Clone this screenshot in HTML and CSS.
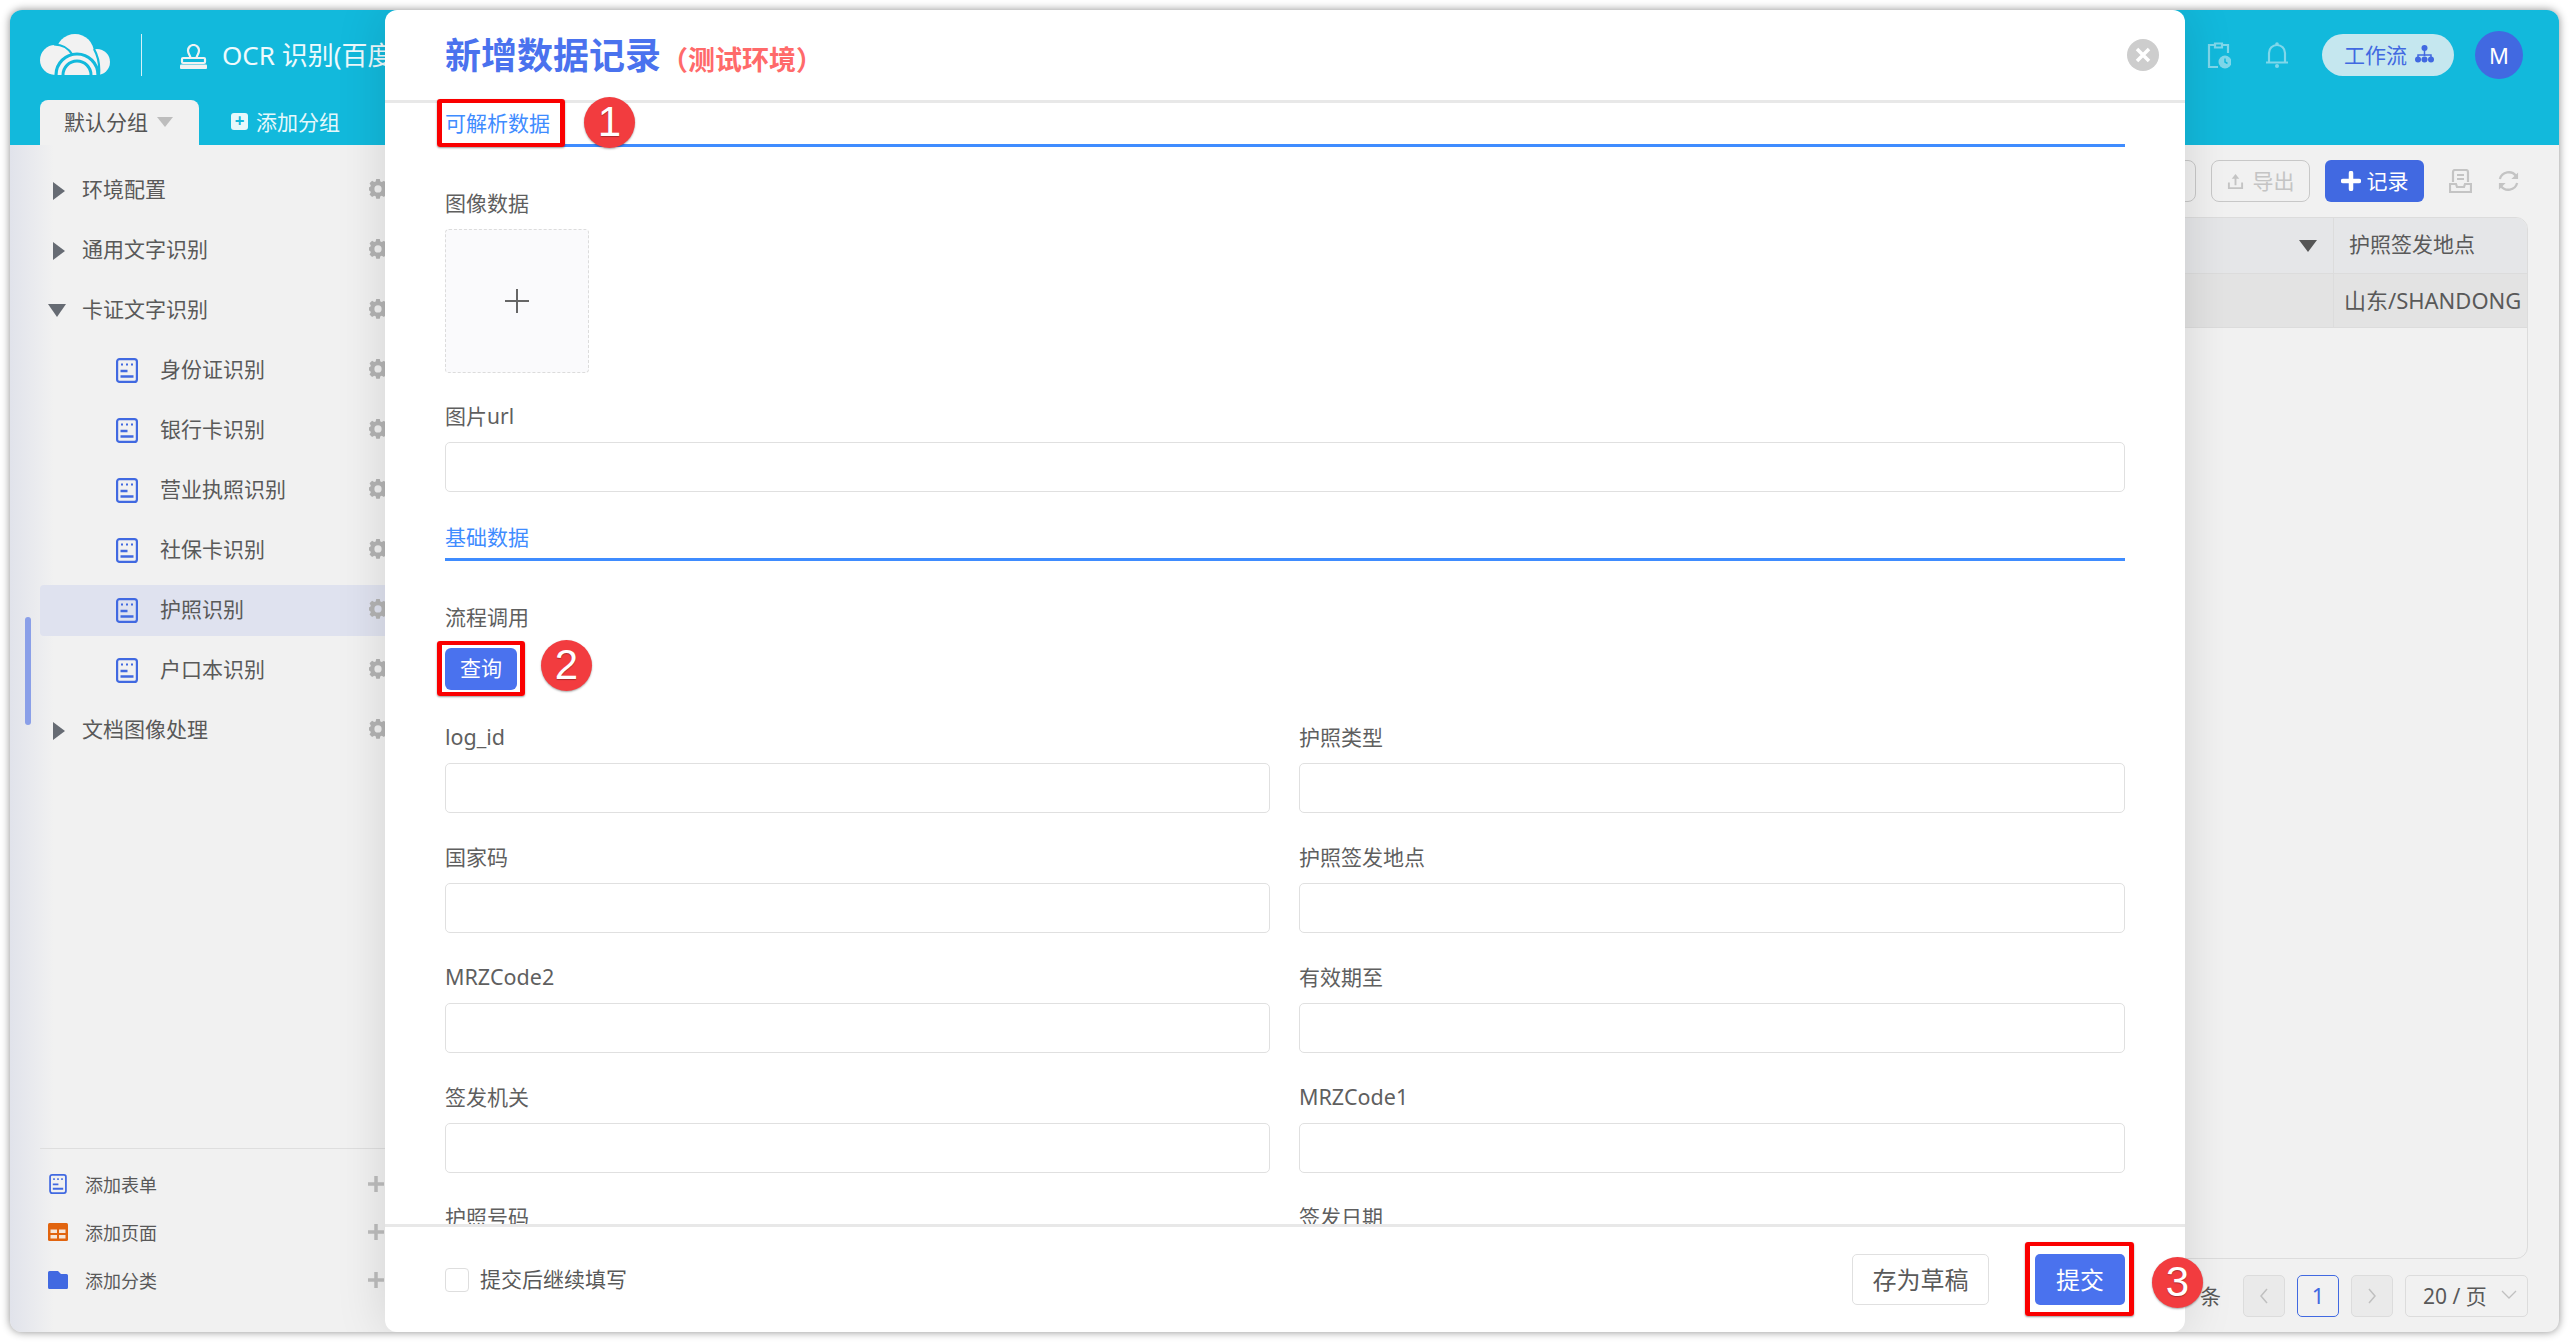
FILE: index.html
```html
<!DOCTYPE html>
<html lang="zh-CN">
<head>
<meta charset="utf-8">
<title>OCR 识别</title>
<link rel="stylesheet" href="styles.css">
</head>
<body>
<svg class="defs" width="0" height="0" aria-hidden="true">
  <symbol id="i-form" viewBox="0 0 22 25">
    <rect x="1.100" y="1.100" width="19.800" height="22.800" rx="2.500" fill="none" stroke="currentColor" stroke-width="2.200"/>
    <path d="M5 6.500h2M10 6.500h2M15 6.500h2" stroke="currentColor" stroke-width="2.200"/>
    <path d="M4.500 13h7M4.500 18.500h13" stroke="currentColor" stroke-width="2.400"/>
  </symbol>
  <symbol id="i-gear" viewBox="0 0 20 20">
    <path fill="#b4b4b4" fill-rule="evenodd" d="M8 0h4l.6 2.700 1.600.7L16.600 2l2.800 2.800-1.400 2.400.7 1.600L21 9.400v3.200l-2.300.6-.7 1.600 1.400 2.400-2.800 2.800-2.400-1.400-1.600.7L12 22H8l-.6-2.700-1.600-.7L3.400 20 .6 17.200 2 14.800l-.7-1.600L-1 12.600V9.400l2.300-.6.700-1.600L.6 4.800 3.400 2l2.400 1.400 1.600-.7zM10 7a4 4 0 1 0 0 8 4 4 0 0 0 0-8z" transform="scale(.9)"/>
  </symbol>
  <symbol id="i-plus" viewBox="0 0 18 18">
    <path d="M9 1v16M1 9h16" stroke="#bdbdbd" stroke-width="3.500"/>
  </symbol>
</svg>

<div class="window">
  <header class="header">
    <div class="topbar">
      <svg class="logo" viewBox="0 0 71 41" aria-hidden="true">
        <g fill="#f2f2f2">
          <circle cx="15" cy="26" r="15"/>
          <circle cx="35" cy="19" r="19"/>
          <circle cx="57" cy="28" r="13"/>
          <rect x="15" y="24" width="42" height="17"/>
        </g>
        <path fill="none" stroke="#12b9dc" stroke-width="2.200" d="M14 10.500c8 0 15 4 19 11M54 15c4 7 6 15 5 26"/>
        <path fill="none" stroke="#12b9dc" stroke-width="3.200" d="M16 41a21 21 0 0 1 42 0"/>
        <path fill="none" stroke="#12b9dc" stroke-width="3" d="M23 41a14 14 0 0 1 28 0"/>
      </svg>
      <span class="divider"></span>
      <svg class="stamp" viewBox="0 0 27 25" aria-hidden="true">
        <path fill="none" stroke="#f2f2f2" stroke-width="2.200" d="M10.500 14c0-2.500-2.500-3.800-2.500-7.500a5.500 5.500 0 0 1 11 0c0 3.700-2.500 5-2.500 7.500"/>
        <rect x="2" y="14" width="23" height="5" rx="1" fill="none" stroke="#f2f2f2" stroke-width="2.200"/>
        <rect x="0" y="20.500" width="27" height="4.500" rx="1" fill="#f2f2f2"/>
      </svg>
      <span class="app-name">OCR 识别(百度云)</span>
      <div class="top-actions">
        <svg class="clip" viewBox="0 0 24 28" aria-hidden="true">
          <path fill="none" stroke="#7fd7ea" stroke-width="2.200" d="M8 4H2v22h9M15 4h6v8M8 2.500h7v4H8z"/>
          <circle cx="18" cy="21" r="6.500" fill="#7fd7ea"/>
          <path d="M18 17.500V21l2.500 1.500" fill="none" stroke="#12b9dc" stroke-width="1.500"/>
        </svg>
        <svg class="bell" viewBox="0 0 24 26" aria-hidden="true">
          <path fill="none" stroke="#7fd7ea" stroke-width="2.200" d="M4 20V11a8 8 0 0 1 16 0v9M1 20.500h22"/>
          <circle cx="12" cy="2" r="1.800" fill="#7fd7ea"/>
          <circle cx="12" cy="24" r="2" fill="#7fd7ea"/>
        </svg>
        <div class="pill">工作流
          <svg class="tree" viewBox="0 0 19 18" aria-hidden="true">
            <circle cx="9.500" cy="3" r="3" fill="#4169e1"/>
            <path d="M9.500 5v6M3 13v-3h13v3" fill="none" stroke="#4169e1" stroke-width="1.500"/>
            <circle cx="3" cy="14.500" r="3" fill="#4169e1"/><circle cx="9.500" cy="14.500" r="3" fill="#4169e1"/><circle cx="16" cy="14.500" r="3" fill="#4169e1"/>
          </svg>
        </div>
        <div class="avatar">M</div>
      </div>
    </div>
    <div class="tabs">
      <div class="tab">默认分组<span class="tab-caret"></span></div>
      <div class="tab-add"><span class="add-box">+</span>添加分组</div>
    </div>
  </header>

  <div class="content">
    <aside class="sidebar">
      <div class="scroll-thumb"></div>
      <nav class="tree-list">
        <div class="row"><span class="twisty"><span class="tri-right"></span></span><span class="row-text">环境配置</span><svg class="gear"><use href="#i-gear"/></svg></div>
        <div class="row"><span class="twisty"><span class="tri-right"></span></span><span class="row-text">通用文字识别</span><svg class="gear"><use href="#i-gear"/></svg></div>
        <div class="row"><span class="twisty"><span class="tri-down"></span></span><span class="row-text">卡证文字识别</span><svg class="gear"><use href="#i-gear"/></svg></div>
        <div class="row child"><svg class="form-icon"><use href="#i-form"/></svg><span class="row-text">身份证识别</span><svg class="gear"><use href="#i-gear"/></svg></div>
        <div class="row child"><svg class="form-icon"><use href="#i-form"/></svg><span class="row-text">银行卡识别</span><svg class="gear"><use href="#i-gear"/></svg></div>
        <div class="row child"><svg class="form-icon"><use href="#i-form"/></svg><span class="row-text">营业执照识别</span><svg class="gear"><use href="#i-gear"/></svg></div>
        <div class="row child"><svg class="form-icon"><use href="#i-form"/></svg><span class="row-text">社保卡识别</span><svg class="gear"><use href="#i-gear"/></svg></div>
        <div class="row child selected"><svg class="form-icon"><use href="#i-form"/></svg><span class="row-text">护照识别</span><svg class="gear"><use href="#i-gear"/></svg></div>
        <div class="row child"><svg class="form-icon"><use href="#i-form"/></svg><span class="row-text">户口本识别</span><svg class="gear"><use href="#i-gear"/></svg></div>
        <div class="row"><span class="twisty"><span class="tri-right"></span></span><span class="row-text">文档图像处理</span><svg class="gear"><use href="#i-gear"/></svg></div>
      </nav>
      <div class="side-foot">
        <div class="foot-row"><svg class="foot-icon form-small"><use href="#i-form"/></svg><span>添加表单</span><svg class="foot-plus"><use href="#i-plus"/></svg></div>
        <div class="foot-row">
          <svg class="foot-icon" viewBox="0 0 20 18" aria-hidden="true"><rect width="20" height="18" rx="1.500" fill="#e1640f"/><path d="M2.500 6.500h6.500v3.500H2.500zM11 6.500h6.500v3.500H11zM2.500 12h6.500v3.500H2.500zM11 12h6.500v3.500H11z" fill="#f6e6da"/></svg>
          <span>添加页面</span><svg class="foot-plus"><use href="#i-plus"/></svg></div>
        <div class="foot-row">
          <svg class="foot-icon" viewBox="0 0 20 18" aria-hidden="true"><path d="M0 1.500A1.500 1.500 0 0 1 1.500 0H10l3 3h5.500A1.500 1.500 0 0 1 20 4.500v12a1.500 1.500 0 0 1-1.500 1.500h-17A1.500 1.500 0 0 1 0 16.500z" fill="#4169e1"/></svg>
          <span>添加分类</span><svg class="foot-plus"><use href="#i-plus"/></svg></div>
      </div>
    </aside>

    <main class="main">
      <div class="toolbar">
        <button class="tool-btn spare">导入</button>
        <button class="tool-btn export">
          <svg class="up-icon" viewBox="0 0 18 18" aria-hidden="true"><path d="M9 1 5 6h3v7h2V6h3zM1 10v7h16v-7h-2v5H3v-5z" fill="#c4c4c4"/></svg>导出</button>
        <button class="record-btn"><svg class="record-plus" viewBox="0 0 20 20" aria-hidden="true"><path d="M10 2v16M2 10h16" stroke="#fff" stroke-width="4.500" stroke-linecap="round"/></svg>记录</button>
        <svg class="tool-icon" viewBox="0 0 23 24" aria-hidden="true"><path d="M4 13V3a2 2 0 0 1 2-2h11a2 2 0 0 1 2 2v10M8 6h7M8 10h7M1 15h6l1 3h7l1-3h6v8H1z" fill="none" stroke="#c4c4c4" stroke-width="2.200"/></svg>
        <svg class="tool-icon refresh" viewBox="0 0 24 24" aria-hidden="true"><path d="M3 10a9.500 9.500 0 0 1 17-3M21 14a9.500 9.500 0 0 1-17 3" fill="none" stroke="#c4c4c4" stroke-width="2.400"/><path d="M22 3v7h-7zM2 21v-7h7z" fill="#c4c4c4"/></svg>
      </div>
      <div class="table">
        <div class="t-row t-head">
          <div class="t-cell t-fill"><span class="t-caret"></span></div>
          <div class="t-cell t-last">护照签发地点</div>
        </div>
        <div class="t-row t-data">
          <div class="t-cell t-fill"></div>
          <div class="t-cell t-last data-text">山东/SHANDONG</div>
        </div>
      </div>
      <div class="pager">
        <span class="pager-total">共 1 条</span>
        <span class="pg-btn"><svg class="chev" viewBox="0 0 10 18" aria-hidden="true"><path d="M8 2 2 9l6 7" fill="none" stroke="#c0c0c0" stroke-width="1.500"/></svg></span>
        <span class="pg-btn current">1</span>
        <span class="pg-btn"><svg class="chev" viewBox="0 0 10 18" aria-hidden="true"><path d="m2 2 6 7-6 7" fill="none" stroke="#c0c0c0" stroke-width="1.500"/></svg></span>
        <span class="pg-size">20 / 页<svg class="chev-down" viewBox="0 0 16 10" aria-hidden="true"><path d="m1 1 7 7 7-7" fill="none" stroke="#c0c0c0" stroke-width="1.300"/></svg></span>
      </div>
    </main>
  </div>

  <section class="modal">
    <div class="modal-head">
      <h1 class="modal-title">新增数据记录</h1><span class="modal-env">（测试环境）</span>
      <svg class="close" viewBox="0 0 32 32" aria-hidden="true"><circle cx="16" cy="16" r="16" fill="#cdcdcd"/><path d="m10 10 12 12M22 10 10 22" stroke="#fff" stroke-width="3.500"/></svg>
    </div>
    <div class="modal-body">
      <div class="sec-title">可解析数据</div>
      <div class="label upload-label">图像数据</div>
      <div class="upload"><svg class="upload-plus" viewBox="0 0 24 24" aria-hidden="true"><path d="M12 0v24M0 12h24" stroke="#666" stroke-width="2"/></svg></div>
      <div class="label url-label">图片url</div>
      <div class="input"></div>
      <div class="sec-title sec-second">基础数据</div>
      <div class="label flow-label">流程调用</div>
      <button class="query-btn">查询</button>
      <div class="grid">
        <div><div class="label latin">log_id</div><div class="input"></div></div>
        <div><div class="label">护照类型</div><div class="input"></div></div>
        <div><div class="label">国家码</div><div class="input"></div></div>
        <div><div class="label">护照签发地点</div><div class="input"></div></div>
        <div><div class="label latin">MRZCode2</div><div class="input"></div></div>
        <div><div class="label">有效期至</div><div class="input"></div></div>
        <div><div class="label">签发机关</div><div class="input"></div></div>
        <div><div class="label latin">MRZCode1</div><div class="input"></div></div>
        <div><div class="label">护照号码</div><div class="input"></div></div>
        <div><div class="label">签发日期</div><div class="input"></div></div>
      </div>
    </div>
    <div class="modal-foot">
      <span class="check"></span><span class="check-text">提交后继续填写</span>
      <button class="draft-btn">存为草稿</button>
      <button class="submit-btn">提交</button>
    </div>
  </section>

  <div class="mark-box box-one"></div>
  <div class="mark-box box-two"></div>
  <div class="mark-box box-three"></div>
  <div class="badge badge-one">1</div>
  <div class="badge badge-two">2</div>
  <div class="badge badge-three">3</div>
</div>
</body>
</html>
```
FILE: styles.css
```css
* { box-sizing: border-box; }
html, body { margin: 0; height: 100%; background: #fff; overflow: hidden; }
body { font-family: "Noto Sans", "Noto Sans CJK SC", sans-serif; color: #595959; font-size: 21px; }
button { font-family: inherit; cursor: pointer; }
.defs { position: absolute; }

.window {
  position: relative;
  width: 2549px;
  height: 1322px;
  margin: 10px;
  border-radius: 12px;
  overflow: hidden;
  display: flex;
  flex-direction: column;
  background: #f1f1f1;
  box-shadow: 0 0 8px rgba(0,0,0,.45);
}

/* header */
.header { height: 135px; background: #12b9dc; flex: none; }
.topbar { height: 90px; display: flex; align-items: center; padding: 0 36px 0 30px; }
.logo { width: 71px; height: 41px; flex: none; margin-top: -1px; }
.divider { width: 1px; height: 42px; background: #d5f1f7; margin-left: 30px; }
.stamp { width: 27px; height: 25px; margin-left: 38px; margin-top: 2px; }
.app-name { color: #eefafd; font-size: 26px; margin-left: 15px; white-space: nowrap; padding-bottom: 2px; }
.top-actions { margin-left: auto; display: flex; align-items: center; }
.clip { width: 24px; height: 28px; margin-right: 34px; }
.bell { width: 24px; height: 26px; margin-right: 33px; }
.pill {
  width: 132px; height: 42px; border-radius: 21px; background: #c5e7ef; color: #4169e1;
  display: flex; align-items: center; padding: 0 0 2px 22px; gap: 8px; font-size: 21px; white-space: nowrap;
}
.tree { width: 19px; height: 18px; }
.avatar {
  width: 48px; height: 48px; border-radius: 50%; background: #4169e1; color: #fff; margin-left: 21px;
  display: flex; align-items: center; justify-content: center; font-size: 22px;
}
.tabs { height: 45px; display: flex; padding-left: 30px; }
.tab {
  width: 159px; background: #f1f1f1; border-radius: 8px 8px 0 0; padding: 0 0 3px 24px;
  display: flex; align-items: center; font-size: 21px; color: #555;
}
.tab-caret {
  width: 0; height: 0; margin-left: 9px; margin-top: 2px;
  border-left: 8px solid transparent; border-right: 8px solid transparent; border-top: 10px solid #bdbdbd;
}
.tab-add { margin-left: 32px; display: flex; align-items: center; color: #e6f8fb; font-size: 21px; padding-bottom: 3px; }
.add-box {
  width: 17px; height: 17px; background: #e6f8fb; color: #12b9dc; border-radius: 3px; margin-right: 8px;
  font-size: 17px; font-weight: 700; line-height: 16px; text-align: center;
}

/* content */
.content { flex: 1; display: flex; min-height: 0; }
.sidebar {
  position: relative; width: 385px; flex: none; display: flex; flex-direction: column;
  padding-top: 20px; background: linear-gradient(90deg, #e1e3eb, #f1f1f1 44px);
}
.scroll-thumb { position: absolute; left: 15px; top: 472px; width: 6px; height: 108px; border-radius: 3px; background: #8a9fe8; }
.tree-list { margin-left: 30px; display: flex; flex-direction: column; gap: 9px; }
.row { height: 51px; display: flex; align-items: center; border-radius: 4px 0 0 4px; padding-left: 13px; padding-right: 6px; }
.row.child { padding-left: 76px; }
.row.selected { background: #dfe2ef; }
.twisty { width: 29px; display: flex; }
.tri-right { width: 0; height: 0; border-left: 12px solid #666b73; border-top: 9px solid transparent; border-bottom: 9px solid transparent; }
.tri-down { width: 0; height: 0; margin-left: -5px; border-top: 13px solid #666b73; border-left: 9px solid transparent; border-right: 9px solid transparent; }
.row-text { white-space: nowrap; line-height: 30px; margin-top: -4px; }
.form-icon { width: 22px; height: 25px; margin-right: 22px; color: #4169e1; flex: none; }
.gear { width: 20px; height: 20px; margin-left: auto; flex: none; margin-top: -4px; }
.side-foot { margin-top: auto; margin-left: 30px; border-top: 1px solid #dedede; padding: 12px 0 27px; }
.foot-row { height: 48px; display: flex; align-items: center; font-size: 18px; padding: 0 10px 2px 8px; }
.foot-icon { width: 20px; height: 18px; margin-right: 17px; flex: none; }
.form-small { height: 20px; color: #4169e1; }
.foot-plus { width: 18px; height: 18px; margin-left: auto; }

/* main */
.main { flex: 1; min-width: 0; display: flex; flex-direction: column; padding: 15px 31px 15px 0; }
.toolbar { height: 42px; display: flex; align-items: center; justify-content: flex-end; flex: none; }
.tool-btn {
  height: 42px; width: 99px; border: 1px solid #c8c8c8; border-radius: 8px; background: transparent; color: #c4c4c4;
  font-size: 21px; display: flex; align-items: center; justify-content: center; gap: 9px; margin-right: 15px; padding: 0 0 3px;
}
.up-icon { width: 17px; height: 17px; margin-top: 3px; }
.record-btn {
  height: 42px; width: 99px; border: 0; border-radius: 6px; background: #4169e1; color: #fff; font-size: 21px;
  display: flex; align-items: center; justify-content: center; gap: 6px; padding: 0 0 3px; margin-right: 25px;
}
.record-plus { width: 20px; height: 20px; margin-top: 3px; }
.tool-icon { width: 23px; height: 24px; }
.refresh { margin-left: 25px; margin-right: 8px; }
.table { flex: 1; margin-top: 15px; margin-left: 15px; border: 1px solid #dcdcdc; border-radius: 12px; overflow: hidden; }
.t-row { display: flex; border-bottom: 1px solid #dcdcdc; }
.t-head { height: 56px; background: #e5e6e8; }
.t-data { height: 54px; background: #e3e3e3; }
.t-cell { display: flex; align-items: center; }
.t-fill { flex: 1; justify-content: flex-end; padding-right: 16px; }
.t-last { width: 194px; flex: none; border-left: 1px solid #dcdcdc; padding: 0 0 5px 15px; white-space: nowrap; }
.data-text { padding: 0 0 3px 10px; font-size: 22px; }
.t-caret { width: 0; height: 0; border-top: 12px solid #555; border-left: 9px solid transparent; border-right: 9px solid transparent; }
.pager { height: 42px; margin-top: 16px; display: flex; align-items: center; justify-content: flex-end; gap: 12px; flex: none; }
.pager-total { margin-right: 10px; white-space: nowrap; padding-bottom: 2px; }
.pg-btn {
  width: 42px; height: 42px; border: 1px solid #dcdcdc; border-radius: 5px; background: #eaeaea;
  display: flex; align-items: center; justify-content: center;
}
.pg-btn.current { background: transparent; border-color: #4169e1; color: #4169e1; font-size: 22px; padding-bottom: 2px; }
.chev { width: 10px; height: 18px; }
.pg-size {
  width: 123px; height: 42px; border: 1px solid #dcdcdc; border-radius: 5px; display: flex; align-items: center;
  justify-content: space-between; padding: 0 10px 2px 17px; white-space: nowrap;
}
.chev-down { width: 16px; height: 10px; }

/* modal */
.modal {
  position: absolute; left: 375px; top: 0; bottom: 0; width: 1800px; background: #fff; border-radius: 12px;
  display: flex; flex-direction: column; box-shadow: 0 0 50px rgba(0,0,0,.13);
}
.modal-head { height: 93px; flex: none; border-bottom: 3px solid #e8e8e8; display: flex; align-items: center; padding: 0 26px 0 60px; }
.modal-title { margin: 2px 0 0; font-size: 36px; line-height: 50px; font-weight: 700; color: #4a72ee; }
.modal-env { font-size: 27px; font-weight: 700; color: #ff6a6a; margin: 7px 0 0 0; }
.close { width: 32px; height: 32px; margin-left: auto; }
.modal-body { flex: 1; min-height: 0; overflow: hidden; padding: 0 60px; }
.sec-title { height: 44px; line-height: 41px; color: #3f8cff; border-bottom: 3px solid #3f8cff; }
.sec-second { margin-top: 25px; }
.label { height: 30px; line-height: 30px; margin-bottom: 11px; color: #5f5f5f; white-space: nowrap; }
.latin { font-size: 21.5px; }
.upload-label { margin-top: 42px; margin-bottom: 10px; line-height: 28px; }
.upload {
  width: 144px; height: 144px; background: #fafafc; border: 1px dashed #dcdcdc; border-radius: 4px;
  display: flex; align-items: center; justify-content: center;
}
.upload-plus { width: 24px; height: 24px; }
.url-label { margin-top: 28px; }
.input { height: 50px; border: 1px solid #e0e0e0; border-radius: 5px; background: #fff; }
.flow-label { margin-top: 42px; margin-bottom: 15px; line-height: 28px; }
.query-btn { display: block; width: 72px; height: 42px; border: 0; border-radius: 6px; background: #4a72ee; color: #fff; font-size: 21px; padding: 0 0 4px; }
.grid { margin-top: 32px; display: grid; grid-template-columns: 825px 1fr; gap: 29px; }
.modal-foot { height: 108px; flex: none; border-top: 3px solid #e8e8e8; display: flex; align-items: center; padding: 0 60px; }
.check { width: 24px; height: 24px; border: 1px solid #dedede; border-radius: 4px; }
.check-text { margin: -3px 0 0 11px; white-space: nowrap; }
.draft-btn {
  margin-left: auto; width: 137px; height: 51px; border: 1px solid #e0e0e0; border-radius: 5px; background: #fff;
  color: #5a5a5a; font-size: 24px; padding: 0 0 3px;
}
.submit-btn { margin-left: 46px; width: 90px; height: 51px; border: 0; border-radius: 5px; background: #4a72ee; color: #fff; font-size: 24px; padding: 0 0 3px; }

/* annotations over the shot */
.mark-box { position: absolute; border: 5px solid #fa0000; border-top-width: 4px; border-bottom-width: 4px; border-radius: 3px; box-shadow: 0 1px 2px rgba(0,0,0,.4); }
.box-one { left: 427px; top: 89px; width: 128px; height: 48px; }
.box-two { left: 427px; top: 631px; width: 88px; height: 55px; }
.box-three { left: 2015px; top: 1232px; width: 109px; height: 74px; }
.badge {
  position: absolute; width: 51px; height: 51px; border-radius: 50%; background: #f23c3f; color: #fff;
  font-family: "Liberation Sans", sans-serif; font-size: 42px; line-height: 50px; text-align: center;
  box-shadow: 0 1px 2px rgba(0,0,0,.35); text-shadow: 0 1px 1px rgba(0,0,0,.3);
}
.badge-one { left: 574px; top: 87px; }
.badge-two { left: 531px; top: 630px; }
.badge-three { left: 2142px; top: 1247px; }
```
